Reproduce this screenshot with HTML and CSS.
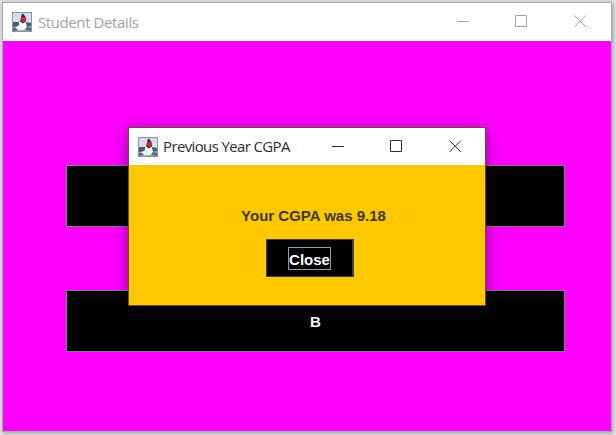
FILE: index.html
```html
<!DOCTYPE html>
<html lang="en">
<head>
<meta charset="utf-8">
<title>Student Details</title>
<link rel="stylesheet" href="styles.css">
</head>
<body>
<svg class="defs" width="0" height="0" aria-hidden="true">
  <symbol id="duke" viewBox="0 0 20 20">
    <rect x=".5" y=".5" width="19" height="19" fill="#d5deea" stroke="#8494ab"/>
    <path d="M1 13h18v6H1z" fill="#a3afbd"/>
    <path d="M1 10l6 0v4l-6 1zM14 10l5 1v3l-5 1z" fill="#4b5a6e"/>
    <path d="M9 5c4 1 5 5 6 10l-3 3-8 0-1-2 4-3z" fill="#f5f7f8"/>
    <path d="M10 1.500c3 1 4 4 4 8l-3 2-3-2z" fill="#302c38"/>
    <circle cx="11.500" cy="7.500" r="2.700" fill="#c02a3a"/>
    <path d="M1 16l3 0 2 2-5 1zM15 15l4 1v3l-6-1z" fill="#5a687a"/>
  </symbol>
  <symbol id="controls" viewBox="0 0 130 13">
    <path d="M0 6.500h12M58.500.500h11v11h-11zM117.500.500l11.500 11.500M129 .500l-11.500 11.500" fill="none" stroke="currentColor"/>
  </symbol>
</svg>
<main class="window">
  <header class="titlebar">
    <svg class="app-icon"><use href="#duke"/></svg>
    <span class="title">Student Details</span>
    <svg class="controls"><use href="#controls"/></svg>
  </header>
  <section class="content">
    <button class="grade"></button>
    <button class="grade">B</button>
  </section>
</main>
<div class="dialog" role="dialog">
  <header class="titlebar">
    <svg class="app-icon"><use href="#duke"/></svg>
    <span class="title">Previous Year CGPA</span>
    <svg class="controls"><use href="#controls"/></svg>
  </header>
  <section class="message">
    <p class="text">Your CGPA was 9.18</p>
    <button class="close"><span class="focus">Close</span></button>
  </section>
</div>
</body>
</html>
```
FILE: styles.css
```css
* { box-sizing: border-box; }
body {
  margin: 0;
  width: 616px;
  height: 435px;
  padding: 2px;
  overflow: hidden;
  background: #e2e2e2;
  font-family: "Liberation Sans", sans-serif;
}
.defs { position: absolute; }
.window {
  width: 610px;
  height: 430px;
  border: 1px solid #aaa;
  box-shadow: 1px 1px 4px #999;
  background: #fff;
}
.titlebar {
  display: flex;
  align-items: center;
  height: 38px;
  padding: 0 24px 0 9px;
  background: #fff;
  color: #a3a3a3;
}
.app-icon { width: 20px; height: 20px; }
.title {
  margin-left: 6px;
  font: 15px/20px "Open Sans", sans-serif;
  letter-spacing: -.4px;
  white-space: nowrap;
}
.window .title { margin-top: -1px; }
.controls { width: 130px; height: 13px; margin-left: auto; }
.window .controls { margin-top: -1px; }
.content {
  display: flex;
  flex-direction: column;
  align-items: center;
  gap: 63px;
  height: 390px;
  padding: 124px 0 0 17px;
  background: #f0f;
}
button {
  padding: 0;
  background: #000;
  color: #fff;
  font: bold 15px/18px "Liberation Sans", sans-serif;
}
.grade {
  width: 499px;
  height: 62px;
  padding-top: 2px;
  border: 1px solid #85789a;
}
.dialog {
  position: absolute;
  left: 128px;
  top: 127px;
  width: 358px;
  height: 179px;
  border: 1px solid #65502f;
  box-shadow: 0 3px 14px rgba(0, 0, 0, .42);
}
.dialog .titlebar { height: 37px; padding-right: 23px; color: #2d2d2d; }
.dialog .title { margin-left: 5px; margin-top: -1px; letter-spacing: -.63px; }
.message {
  display: flex;
  flex-direction: column;
  align-items: center;
  height: 140px;
  padding-top: 42px;
  background: #ffc800;
}
.text {
  margin: 0 0 0 13px;
  font: bold 15px/18px "Liberation Sans", sans-serif;
  color: #403719;
}
.close {
  width: 88px;
  height: 38px;
  margin: 14px 0 0 5px;
  border: 1px solid #38434d;
  border-right-width: 2px;
}
.focus {
  display: inline-block;
  height: 23px;
  margin-left: 1px;
  border: 1px solid #8b9eae;
  line-height: 24px;
}
```
